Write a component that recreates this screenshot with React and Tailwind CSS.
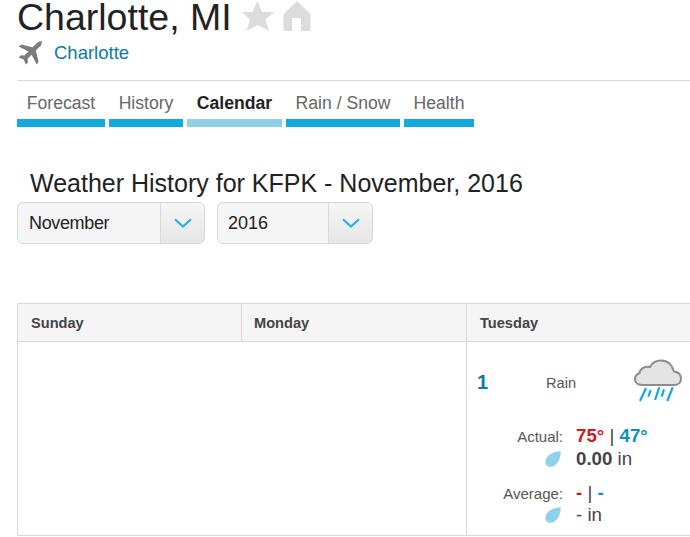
const tabs = [
  { label: "Forecast", w: "w-[88px]" },
  { label: "History", w: "w-[74px]" },
  { label: "Calendar", w: "w-[95px]", active: true },
  { label: "Rain / Snow", w: "w-[114px]" },
  { label: "Health", w: "w-[70px]" },
];

function Drop() {
  return (
    <svg width="16" height="16" viewBox="0 0 16 16" className="shrink-0">
      <path d="M15.8 0.2C11 0.2 0.4 3 0.4 11C0.4 14 2.500 15.800 5.500 15.800C11 15.800 15.800 9 15.800 0.200Z" fill="#8fd0ea" />
    </svg>
  );
}

function Chevron() {
  return (
    <svg width="18" height="10" viewBox="0 0 18 10" fill="none" stroke="#2ab0e0" strokeWidth="2.2">
      <path d="M1 1.2L9 8.5L17 1.2" />
    </svg>
  );
}

function Select({ label, w, textW, labelClass }) {
  return (
    <div className={`flex h-[42px] ${w} rounded-[6px] border border-[#d8d8d8] bg-[#f5f5f5] overflow-hidden`}>
      <div className={`${textW} flex items-center text-[18px] text-[#222] ${labelClass}`}>{label}</div>
      <div className="flex-1 flex items-center justify-center border-l border-[#d8d8d8] bg-gradient-to-b from-[#f5f5f5] to-[#e6e6e6]">
        <Chevron />
      </div>
    </div>
  );
}

export default function App() {
  return (
    <div className="w-[690px] h-[537px] overflow-hidden bg-white text-[#222]" style={{ fontFamily: '"Liberation Sans", Arial, sans-serif' }}>
      <div className="pl-[17px] h-[36px] pb-[2px] flex items-center">
        <h1 className="text-[37.5px] leading-[34px] text-[#222] w-[225px] whitespace-nowrap">Charlotte, MI</h1>
        <svg width="32" height="30" viewBox="0 0 32 30" className="-mt-[2px] shrink-0">
          <path d="M15.500 0L20 11L32 11L23.300 18.700L27.300 30L15.700 24L4.700 30L8 18.700L0 11L10.500 11Z" fill="#dcdcdc" />
        </svg>
        <svg width="28" height="30" viewBox="0 0 28 30" className="ml-[9px] -mt-[2px] shrink-0">
          <path d="M14 0L27.500 13V30H18V17H9V30H0.500V13Z" fill="#dcdcdc" />
        </svg>
      </div>
      <div className="pl-[18px] h-[32px] flex items-center mt-[1px]">
        <svg width="24" height="24" viewBox="0 0 24 24" className="shrink-0">
          <path d="M23.700 0.300C22.500 -0.200 20.200 0.800 18.600 2.300L14.600 6.300L3.400 3.600L0.700 5.500L10.500 10.500L6.400 14.600L2.800 14.200L0.700 16.500L5.800 18.400L7.700 23.500L10 21.400L9.600 17.800L13.700 13.700L18.700 23.500L20.600 20.800L17.900 9.600L21.900 5.600C23.400 4 24.200 1.500 23.700 0.300Z" fill="#7c7c7c" />
        </svg>
        <a className="ml-[12px] text-[18.500px] text-[#0b7aa8]">Charlotte</a>
      </div>
      <div className="ml-[17px] mt-[11px] border-t border-[#d9d9d9]" />
      <div className="flex gap-[4px] pl-[17px] mt-[9px]">
        {tabs.map((t) => (
          <div key={t.label} className={t.w}>
            <div className={`h-[29px] pb-[2px] flex items-center justify-center text-[17.600px] leading-none ${t.active ? "font-bold text-[#222]" : "text-[#666]"}`}>
              {t.label}
            </div>
            <div className={`h-[8px] ${t.active ? "bg-[#8fcfe8]" : "bg-[#13a9de]"}`} />
          </div>
        ))}
      </div>
      <h2 className="ml-[30px] mt-[42px] text-[25px] leading-[28px] text-[#222] whitespace-nowrap">Weather History for KFPK - November, 2016</h2>
      <div className="flex gap-[12px] pl-[17px] mt-[5px]">
        <Select label="November" w="w-[188px]" textW="w-[142px]" labelClass="pl-[11px] tracking-[-0.350px]" />
        <Select label="2016" w="w-[156px]" textW="w-[110px]" labelClass="pl-[10px]" />
      </div>
      <div className="ml-[17px] mt-[59px] w-[690px] border border-[#d9d9d9]">
        <div className="flex h-[38px] bg-[#f5f5f5] border-b border-[#d9d9d9] text-[14.600px] font-bold text-[#444]">
          <div className="w-[224px] border-r border-[#d9d9d9] pl-[13px] pt-[2px] flex items-center">Sunday</div>
          <div className="w-[225px] border-r border-[#d9d9d9] pl-[12px] pt-[2px] flex items-center">Monday</div>
          <div className="pl-[13px] pt-[2px] flex items-center">Tuesday</div>
        </div>
        <div className="flex h-[193px]">
          <div className="w-[449px] border-r border-[#d9d9d9]" />
          <div className="w-[224px] pl-[10px] pt-[20px]">
            <div className="flex items-start h-[60px]">
              <div className="w-[24px] mt-[8px] text-[20px] leading-[24px] font-bold text-[#0b7aa8]">1</div>
              <div className="w-[98px] pl-[45px] mt-[13px] text-[14.600px] leading-[17px] text-[#555]">Rain</div>
              <svg width="48" height="44" viewBox="0 0 48 44" fill="none" className="ml-[35px] -mt-[3px] shrink-0">
                <path d="M9 26H40C44 26 47 23.500 47 19.500C47 15.500 44 13 40 12.500C38.500 6 33.500 1.500 27 1.500C22 1.500 18 4 16 8C10 7 6 10 5.500 14C3 15 1 17.500 1 20.500C1 24 4.500 26 9 26Z" fill="#e3e3e3" stroke="#8c8c8c" strokeWidth="2" />
                <path d="M6 42L12 29M14.300 37.700L16.700 31M21 41L25.300 28.300M27.700 37.700L30 30.300M33.300 42L38.700 28.300" stroke="#13a9de" strokeWidth="2.200" />
              </svg>
            </div>
            <div className="flex mt-[3px] h-[22px] items-center">
              <div className="w-[86px] text-right text-[15px] mt-[2px] text-[#555]">Actual:</div>
              <div className="ml-[13px] text-[18.700px] leading-none">
                <span className="font-bold text-[#d5161f]">75°</span>
                <span className="text-[#444]"> | </span>
                <span className="font-bold text-[#0b8fc4]">47°</span>
              </div>
            </div>
            <div className="flex h-[22px] items-center mt-[1px]">
              <div className="w-[87px] flex justify-end pr-[3px]"><Drop /></div>
              <div className="ml-[12px] text-[18.700px] leading-none text-[#444]"><b>0.00</b> in</div>
            </div>
            <div className="flex mt-[12px] h-[22px] items-center">
              <div className="w-[86px] text-right text-[15px] mt-[2px] text-[#555]">Average:</div>
              <div className="ml-[13px] text-[18.700px] leading-none">
                <span className="font-bold text-[#d5161f]">-</span>
                <span className="text-[#444]"> | </span>
                <span className="font-bold text-[#0b8fc4]">-</span>
              </div>
            </div>
            <div className="flex h-[22px] items-center">
              <div className="w-[87px] flex justify-end pr-[3px]"><Drop /></div>
              <div className="ml-[12px] text-[18.700px] leading-none text-[#444]">- in</div>
            </div>
          </div>
        </div>
      </div>
    </div>
  );
}
